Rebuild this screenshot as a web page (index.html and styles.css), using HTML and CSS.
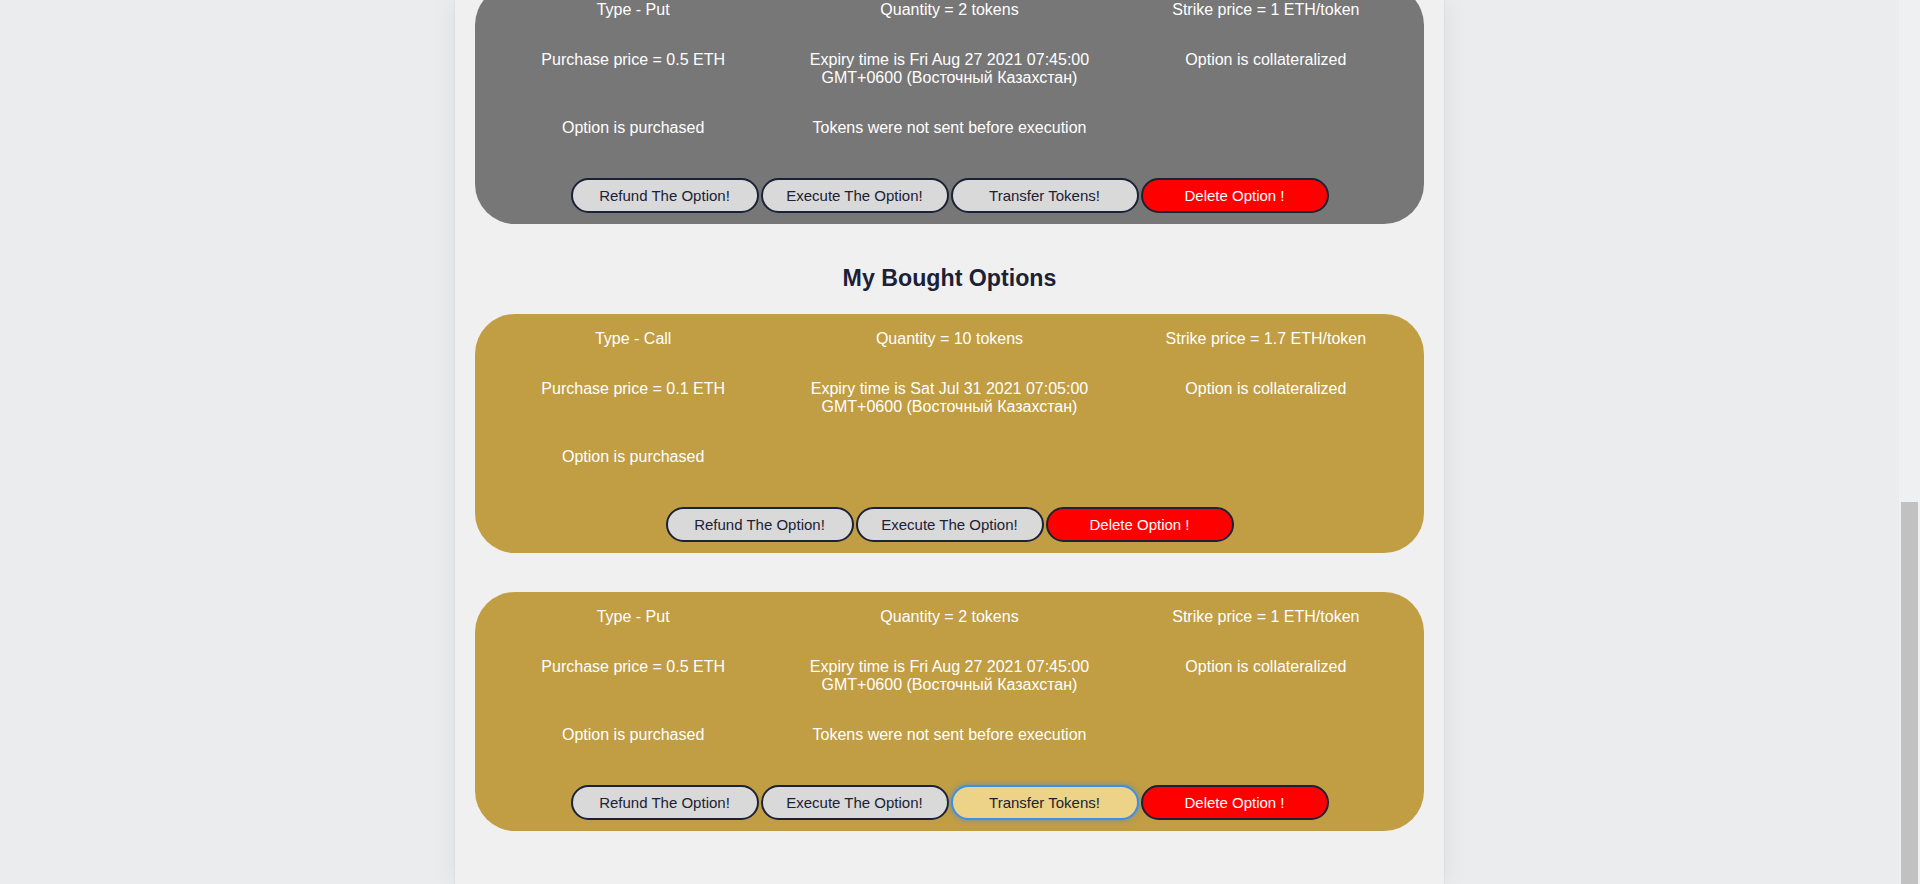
FILE: index.html
```html
<!DOCTYPE html>
<html lang="ru">
<head>
<meta charset="utf-8">
<title>Options</title>
<link rel="stylesheet" href="styles.css">
</head>
<body>
<div class="viewport">
  <main class="panel">
    <div class="content">
      <section class="card card-gray">
        <div class="grid">
          <p>Type - Put</p>
          <p>Quantity = 2 tokens</p>
          <p>Strike price = 1 ETH/token</p>
          <p>Purchase price = 0.5 ETH</p>
          <p>Expiry time is Fri Aug 27 2021 07:45:00 GMT+0600 (Восточный Казахстан)</p>
          <p>Option is collateralized</p>
          <p>Option is purchased</p>
          <p>Tokens were not sent before execution</p>
        </div>
        <div class="actions">
          <button class="btn">Refund The Option!</button>
          <button class="btn">Execute The Option!</button>
          <button class="btn">Transfer Tokens!</button>
          <button class="btn btn-danger">Delete Option !</button>
        </div>
      </section>

      <h2 class="section-title">My Bought Options</h2>

      <section class="card card-gold">
        <div class="grid">
          <p>Type - Call</p>
          <p>Quantity = 10 tokens</p>
          <p>Strike price = 1.7 ETH/token</p>
          <p>Purchase price = 0.1 ETH</p>
          <p>Expiry time is Sat Jul 31 2021 07:05:00 GMT+0600 (Восточный Казахстан)</p>
          <p>Option is collateralized</p>
          <p>Option is purchased</p>
        </div>
        <div class="actions">
          <button class="btn">Refund The Option!</button>
          <button class="btn">Execute The Option!</button>
          <button class="btn btn-danger">Delete Option !</button>
        </div>
      </section>

      <section class="card card-gold">
        <div class="grid">
          <p>Type - Put</p>
          <p>Quantity = 2 tokens</p>
          <p>Strike price = 1 ETH/token</p>
          <p>Purchase price = 0.5 ETH</p>
          <p>Expiry time is Fri Aug 27 2021 07:45:00 GMT+0600 (Восточный Казахстан)</p>
          <p>Option is collateralized</p>
          <p>Option is purchased</p>
          <p>Tokens were not sent before execution</p>
        </div>
        <div class="actions">
          <button class="btn">Refund The Option!</button>
          <button class="btn">Execute The Option!</button>
          <button class="btn btn-focused">Transfer Tokens!</button>
          <button class="btn btn-danger">Delete Option !</button>
        </div>
      </section>
    </div>
  </main>
</div>
<div class="scrollbar"><div class="scrollbar-thumb"></div></div>
</body>
</html>
```

FILE: styles.css
```css
html, body {
  margin: 0;
  padding: 0;
  height: 884px;
  overflow: hidden;
}

body {
  background: #ebecee;
  font-family: "Liberation Sans", Arial, sans-serif;
  color: #1b2136;
}

.viewport {
  display: flex;
  justify-content: center;
  padding-right: 21px;
  height: 884px;
}

.panel {
  width: 989px;
  box-sizing: border-box;
  padding: 0 20px;
  background: #f0f0f0;
  box-shadow: 0 0 1px rgba(0, 0, 0, 0.18), 0 0 24px rgba(0, 0, 0, 0.07);
  overflow: hidden;
}

.content {
  margin-top: -15px;
}

.card {
  border-radius: 40px;
  padding: 0 0 11px;
  margin-bottom: 40px;
  color: #ffffff;
}

.card-gray {
  background: #777777;
}

.card-gold {
  background: #c19d44;
}

.grid {
  display: grid;
  grid-template-columns: repeat(3, 1fr);
  margin-top: -1px;
}

.grid p {
  margin: 16px 0;
  font-size: 16px;
  line-height: 18px;
  text-align: center;
}

.actions {
  display: flex;
  justify-content: center;
  gap: 2px;
  margin-top: 25px;
}

.btn {
  width: 188px;
  height: 35px;
  box-sizing: border-box;
  border: 2px solid #1b2136;
  border-radius: 18px;
  background: #d9d9d9;
  color: #1b2136;
  font-family: "Liberation Sans", Arial, sans-serif;
  font-size: 15px;
  padding: 0;
  cursor: pointer;
}

.btn-danger {
  background: #ff0000;
  color: #ffffff;
}

.btn-focused {
  background: #ecd387;
  border-color: #3d8fe6;
  box-shadow: 0 0 5px rgba(61, 143, 230, 0.8);
}

.section-title {
  margin: 0 0 23px;
  font-size: 23.2px;
  line-height: 28px;
  font-weight: bold;
  text-align: center;
  color: #1b2136;
}

.scrollbar {
  position: fixed;
  top: 0;
  right: 0;
  width: 21px;
  height: 884px;
  background: #eff0f1;
}

.scrollbar-thumb {
  position: absolute;
  left: 2px;
  top: 502px;
  width: 17px;
  height: 382px;
  background: #c1c1c1;
}
```
